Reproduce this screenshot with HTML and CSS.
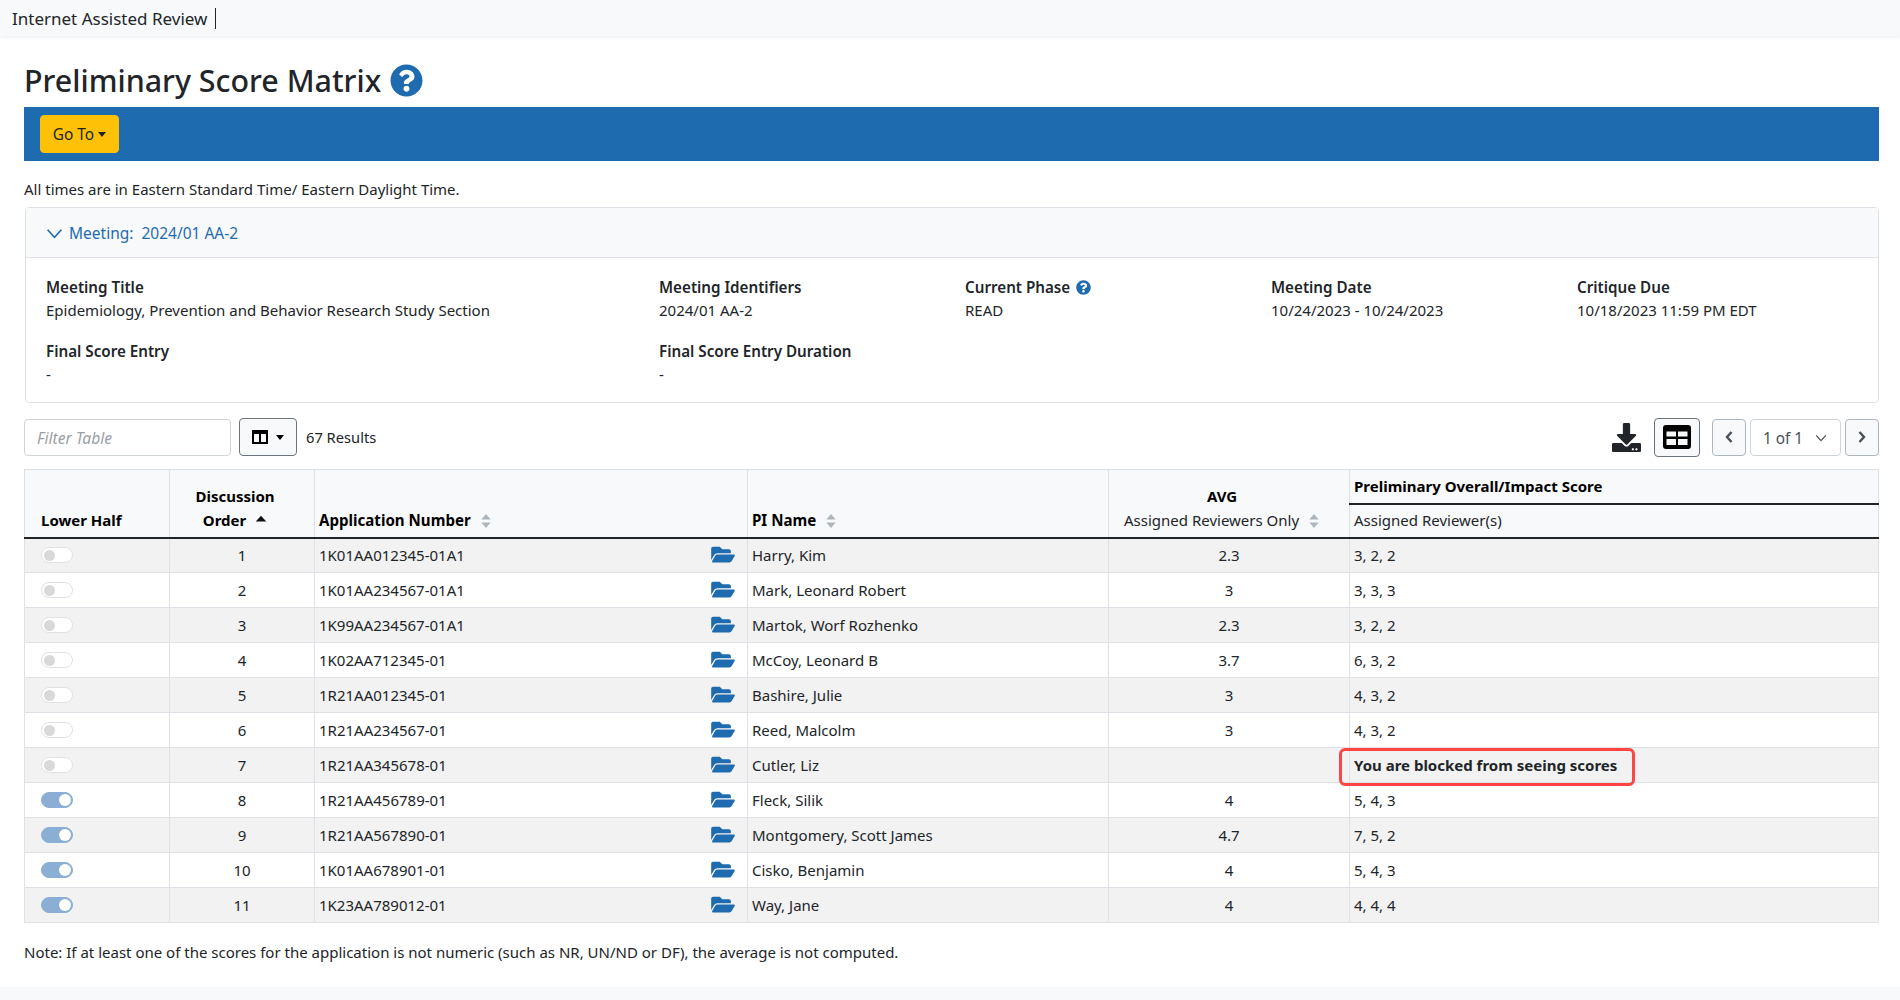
FILE: index.html
```html
<!DOCTYPE html>
<html lang="en">
<head>
<meta charset="utf-8">
<title>Preliminary Score Matrix</title>
<link rel="stylesheet" href="styles.css">
</head>
<body>
<header class="topbar"><span class="brand">Internet Assisted Review</span></header>
<main class="main">
  <h1 class="title">Preliminary Score Matrix
    <svg class="title-help" viewBox="0 0 512 512"><path d="M504 256c0 136.997-111.043 248-248 248S8 392.997 8 256C8 119.083 119.043 8 256 8s248 111.083 248 248zM262.655 90c-54.497 0-89.255 22.957-116.549 63.758-3.536 5.286-2.353 12.415 2.715 16.258l34.699 26.31c5.205 3.947 12.621 3.008 16.665-2.122 17.864-22.658 30.113-35.797 57.303-35.797 20.429 0 45.698 13.148 45.698 32.958 0 14.976-12.363 22.667-32.534 33.976C247.128 238.528 216 254.941 216 296v4c0 6.627 5.373 12 12 12h56c6.627 0 12-5.373 12-12v-1.333c0-28.462 83.186-29.647 83.186-106.667 0-58.002-60.165-102-116.531-102zM256 338c-25.365 0-46 20.635-46 46 0 25.364 20.635 46 46 46s46-20.636 46-46c0-25.365-20.635-46-46-46z"/></svg>
  </h1>
  <div class="actionbar"><button class="goto">Go To<span class="caret"></span></button></div>
  <p class="tz">All times are in Eastern Standard Time/ Eastern Daylight Time.</p>

  <section class="card">
    <div class="card-head">
      <svg class="chev" viewBox="0 0 16 16"><path d="M1.5 4.5 8 11.5 14.5 4.5" fill="none" stroke="currentColor" stroke-width="1.5"/></svg>
      <span>Meeting:&nbsp; 2024/01 AA-2</span>
    </div>
    <div class="card-body">
      <div class="info"><b>Meeting Title</b><span>Epidemiology, Prevention and Behavior Research Study Section</span></div>
      <div class="info"><b>Meeting Identifiers</b><span>2024/01 AA-2</span></div>
      <div class="info"><b>Current Phase <svg class="mini-help" viewBox="0 0 512 512"><path d="M504 256c0 136.997-111.043 248-248 248S8 392.997 8 256C8 119.083 119.043 8 256 8s248 111.083 248 248zM262.655 90c-54.497 0-89.255 22.957-116.549 63.758-3.536 5.286-2.353 12.415 2.715 16.258l34.699 26.31c5.205 3.947 12.621 3.008 16.665-2.122 17.864-22.658 30.113-35.797 57.303-35.797 20.429 0 45.698 13.148 45.698 32.958 0 14.976-12.363 22.667-32.534 33.976C247.128 238.528 216 254.941 216 296v4c0 6.627 5.373 12 12 12h56c6.627 0 12-5.373 12-12v-1.333c0-28.462 83.186-29.647 83.186-106.667 0-58.002-60.165-102-116.531-102zM256 338c-25.365 0-46 20.635-46 46 0 25.364 20.635 46 46 46s46-20.636 46-46c0-25.365-20.635-46-46-46z"/></svg></b><span>READ</span></div>
      <div class="info"><b>Meeting Date</b><span>10/24/2023 - 10/24/2023</span></div>
      <div class="info"><b>Critique Due</b><span>10/18/2023 11:59 PM EDT</span></div>
      <div class="info"><b>Final Score Entry</b><span>-</span></div>
      <div class="info span-rest"><b>Final Score Entry Duration</b><span>-</span></div>
    </div>
  </section>

  <div class="toolbar">
    <input class="filter" placeholder="Filter Table">
    <button class="colbtn">
      <svg class="col-ic" viewBox="0 0 16 14"><path d="M1 1h14v12H1z" fill="none" stroke="currentColor" stroke-width="2"/><path d="M8 1v12" stroke="currentColor" stroke-width="2"/><path d="M1 1h14v3H1z"/></svg>
      <span class="caret"></span>
    </button>
    <span class="results">67 Results</span>
    <div class="tools-right">
      <svg class="dl" viewBox="0 0 512 512"><path d="M216 0h80c13.3 0 24 10.7 24 24v168h87.7c17.8 0 26.7 21.5 14.1 34.1L269.7 378.3c-7.5 7.5-19.8 7.5-27.3 0L90.1 226.1c-12.6-12.6-3.7-34.1 14.1-34.1H192V24c0-13.3 10.7-24 24-24zm296 376v112c0 13.3-10.7 24-24 24H24c-13.3 0-24-10.7-24-24V376c0-13.3 10.7-24 24-24h146.7l49 49c20.1 20.1 52.5 20.1 72.6 0l49-49H488c13.3 0 24 10.7 24 24zm-124 88c0-11-9-20-20-20s-20 9-20 20 9 20 20 20 20-9 20-20zm64 0c0-11-9-20-20-20s-20 9-20 20 9 20 20 20 20-9 20-20z"/></svg>
      <button class="tablebtn">
        <svg viewBox="0 0 28 24" class="table-ic"><rect width="28" height="24" rx="3"/><rect x="3.5" y="6.5" width="9.5" height="5" fill="#f8f9fa"/><rect x="15" y="6.5" width="9.5" height="5" fill="#f8f9fa"/><rect x="3.5" y="14" width="9.5" height="6" fill="#f8f9fa"/><rect x="15" y="14" width="9.5" height="6" fill="#f8f9fa"/></svg>
      </button>
      <div class="pager">
        <button class="pg"><svg viewBox="0 0 10 14"><path d="M7.5 2 3 7l4.5 5" fill="none" stroke="currentColor" stroke-width="2.4"/></svg></button>
        <div class="pg-select">1 of 1<svg viewBox="0 0 16 16"><path d="M2.5 5 8 11l5.5-6" fill="none" stroke="currentColor" stroke-width="1.4"/></svg></div>
        <button class="pg"><svg viewBox="0 0 10 14"><path d="M2.5 2 7 7l-4.5 5" fill="none" stroke="currentColor" stroke-width="2.4"/></svg></button>
      </div>
    </div>
  </div>

  <table class="grid">
    <colgroup><col class="c1"><col class="c2"><col class="c3"><col class="c4"><col class="c5"><col></colgroup>
    <thead>
      <tr>
        <th rowspan="2" class="lower">Lower Half</th>
        <th rowspan="2" class="order">Discussion<br>Order <svg class="sort" viewBox="0 0 10 12"><path d="M5 1.5 9.5 6.5H.5z" fill="#111"/></svg></th>
        <th rowspan="2" class="left">Application Number <svg class="sort" viewBox="0 0 10 12"><path d="M5 0 9 4.7H1zM5 12 1 7.3h8z" fill="#adb5bd"/></svg></th>
        <th rowspan="2" class="left">PI Name <svg class="sort" viewBox="0 0 10 12"><path d="M5 0 9 4.7H1zM5 12 1 7.3h8z" fill="#adb5bd"/></svg></th>
        <th rowspan="2" class="avg">AVG<div class="sub">Assigned Reviewers Only <svg class="sort" viewBox="0 0 10 12"><path d="M5 0 9 4.7H1zM5 12 1 7.3h8z" fill="#adb5bd"/></svg></div></th>
        <th class="group">Preliminary Overall/Impact Score</th>
      </tr>
      <tr><th class="assigned">Assigned Reviewer(s)</th></tr>
    </thead>
    <tbody id="rows"></tbody>
  </table>
  <p class="note">Note: If at least one of the scores for the application is not numeric (such as NR, UN/ND or DF), the average is not computed.</p>
</main>
<div class="foot"></div>
<script src="app.js"></script>
</body>
</html>
```
FILE: app.js
```js
const data = [
  ["1","1K01AA012345-01A1","Harry, Kim","2.3","3, 2, 2",0],
  ["2","1K01AA234567-01A1","Mark, Leonard Robert","3","3, 3, 3",0],
  ["3","1K99AA234567-01A1","Martok, Worf Rozhenko","2.3","3, 2, 2",0],
  ["4","1K02AA712345-01","McCoy, Leonard B","3.7","6, 3, 2",0],
  ["5","1R21AA012345-01","Bashire, Julie","3","4, 3, 2",0],
  ["6","1R21AA234567-01","Reed, Malcolm","3","4, 3, 2",0],
  ["7","1R21AA345678-01","Cutler, Liz","","",0],
  ["8","1R21AA456789-01","Fleck, Silik","4","5, 4, 3",1],
  ["9","1R21AA567890-01","Montgomery, Scott James","4.7","7, 5, 2",1],
  ["10","1K01AA678901-01","Cisko, Benjamin","4","5, 4, 3",1],
  ["11","1K23AA789012-01","Way, Jane","4","4, 4, 4",1]
];
const folder = '<svg class="folder" viewBox="0 0 576 512"><path d="M572.694 292.093L500.27 416.248A63.997 63.997 0 0 1 444.989 448H45.025c-18.523 0-30.064-20.093-20.731-36.093l72.424-124.155A64 64 0 0 1 152 256h399.964c18.523 0 30.064 20.093 20.73 36.093zM152 224h328v-48c0-26.51-21.49-48-48-48H272l-64-64H48C21.49 64 0 85.49 0 112v278.046l69.077-118.418C86.214 242.25 117.989 224 152 224z"/></svg>';
document.getElementById("rows").innerHTML = data.map(r => {
  const score = r[0] === "7"
    ? '<td class="score blocked-cell"><span class="blocked">You are blocked from seeing scores</span></td>'
    : `<td class="score">${r[4]}</td>`;
  return `<tr><td class="tog"><span class="toggle${r[5] ? " on" : ""}"></span></td>` +
    `<td class="ctr">${r[0]}</td>` +
    `<td><div class="app"><span>${r[1]}</span>${folder}</div></td>` +
    `<td>${r[2]}</td><td class="ctr">${r[3]}</td>${score}</tr>`;
}).join("");
```
FILE: styles.css
```css
* { box-sizing: border-box; }
html, body { margin: 0; height: 1000px; overflow: hidden; }
body { font-family: "Noto Sans", "Open Sans", sans-serif; font-size: 15px; color: #212529; background: #fff; position: relative; }
button { font-family: inherit; }
.topbar { height: 36px; background: #f8f9fa; box-shadow: 0 1px 4px rgba(0,0,0,.08); padding-left: 12px; display: flex; align-items: center; }
.brand { font-size: 17px; color: #212529; border-right: 1px solid #212529; padding-right: 8px; line-height: 21px; }
.main { padding: 0 21px 0 24px; }
.title { margin: 0; height: 71px; padding-top: 19px; font-size: 30.4px; font-weight: 500; line-height: 40px; display: flex; align-items: center; gap: 9px; }
.title-help { width: 33px; height: 33px; fill: #1f6bb0; margin-top: -2px; }
.actionbar { height: 54px; background: #1f6bb0; padding: 8px 16px; }
.goto { height: 38px; width: 79px; background: #ffc107; border: 1px solid #ffc107; border-radius: 4px; font-size: 15.4px; color: #212529; padding: 0; }
.caret { display: inline-block; border-top: 5px solid currentColor; border-left: 4.5px solid transparent; border-right: 4.5px solid transparent; vertical-align: 3px; margin-left: 4px; }
.tz { margin: 0; height: 46px; padding-top: 17px; line-height: 22px; font-size: 15px; }
.card { margin-left: 1px; border: 1px solid #dee2e6; border-radius: 4px; height: 196px; }
.card-head { height: 50px; background: #f8f9fa; border-bottom: 1px solid #dee2e6; display: flex; align-items: center; padding: 1px 0 0 20px; gap: 6px; color: #1f6bb0; font-size: 15.5px; }
.chev { width: 17px; height: 17px; }
.card-body { display: grid; grid-template-columns: 613px 306px 306px 306px 1fr; padding: 16px 20px 0; grid-auto-rows: 64px; font-size: 15px; }
.info { display: flex; flex-direction: column; line-height: 24px; }
.info b { font-weight: 600; font-size: 15.2px; margin-top: 1px; margin-bottom: -1px; }
.info span { font-size: 15px; }
.span-rest { grid-column: 2 / -1; }
.mini-help { width: 15px; height: 15px; fill: #1f6bb0; vertical-align: -2px; margin-left: 2px; }
.toolbar { height: 66px; display: flex; align-items: center; padding-top: 2px; }
.filter { width: 207px; height: 37px; border: 1px solid #ced4da; border-radius: 4px; padding: 2px 12px 0; font: italic 15.6px "Noto Sans", sans-serif; }
.filter::placeholder { color: #9aa0a6; }
.colbtn { width: 58px; height: 38px; margin-left: 8px; background: #f8f9fa; border: 1px solid #6c757d; border-radius: 4px; color: #000; display: flex; align-items: center; justify-content: center; gap: 8px; padding: 0; }
.col-ic { width: 16px; height: 14px; }
.colbtn .caret { margin: 0; vertical-align: 0; }
.results { margin-left: 9px; font-size: 14.7px; }
.tools-right { margin-left: auto; display: flex; align-items: center; }
.dl { width: 29px; height: 29px; fill: #212529; }
.tablebtn { width: 46px; height: 39px; margin-left: 13px; background: #f8f9fa; border: 1px solid #6c757d; border-radius: 4px; padding: 0; display: flex; align-items: center; justify-content: center; }
.table-ic { width: 28px; height: 24px; }
.pager { display: flex; margin-left: 12px; gap: 4px; }
.pg { width: 34px; height: 37px; background: #f8f9fa; border: 1px solid #adb5bd; border-radius: 4px; color: #495057; padding: 0; display: flex; align-items: center; justify-content: center; }
.pg svg { width: 10px; height: 14px; }
.pg-select { width: 91px; height: 37px; border: 1px solid #ced4da; border-radius: 4px; color: #495057; display: flex; align-items: center; justify-content: center; gap: 11px; font-size: 15.4px; padding-top: 2px; }
.pg-select svg { width: 14px; height: 14px; }
.grid { width: 1855px; border-collapse: collapse; table-layout: fixed; font-size: 15px; }
.c1 { width: 145px; } .c2 { width: 145px; } .c3 { width: 433px; } .c4 { width: 361px; } .c5 { width: 241px; }
.grid th, .grid td { border: 1px solid #dee2e6; }
.grid thead th { background: #f8f9fa; vertical-align: bottom; font-weight: 700; color: #000; padding: 0 4px; line-height: 24px; border-bottom: 2px solid #212529; }
.grid thead tr:first-child th { height: 34px; }
.grid thead tr:last-child th { height: 34px; }
.lower { text-align: left; padding: 0 16px 5px !important; }
.order { text-align: center; padding: 0 18px 5px 4px !important; }
.left { text-align: left; padding-bottom: 5px !important; font-size: 15.1px; }
.avg { text-align: center; padding: 0 18px 5px 4px !important; }
.sub { font-weight: 400; color: #212529; }
.group { text-align: left; vertical-align: middle !important; }
.assigned { text-align: left; font-weight: 400 !important; color: #212529 !important; vertical-align: middle !important; border-top: 0; padding-bottom: 2px !important; }
.sort { width: 12px; height: 14px; margin-left: 5px; vertical-align: -2px; }
.grid td { height: 35px; padding: 0 4px; line-height: 20px; }
.grid tbody tr:nth-child(odd) td { background: #f2f2f2; }
.ctr { text-align: center; }
.tog { padding-left: 16px !important; }
.toggle { display: block; width: 32px; height: 16px; border: 1px solid #dfe2e5; border-radius: 8px; position: relative; background: #fff; }
.toggle::after { content: ""; position: absolute; top: 1.5px; left: 2px; width: 11px; height: 11px; border-radius: 50%; background: #d9d9d9; }
.toggle.on { background: #8baed4; border-color: #8baed4; }
.toggle.on::after { top: 1px; left: auto; right: 1px; width: 12px; height: 12px; background: #fff; }
.app { display: flex; justify-content: space-between; align-items: center; padding-right: 8px; }
.folder { width: 24px; height: 21px; fill: #1f6bb0; margin-bottom: 2px; }
.blocked-cell { position: relative; font-weight: 700; }
.blocked { position: relative; }
.blocked::before { content: ""; position: absolute; left: -15px; right: -18px; top: -7px; bottom: -11px; border: 3px solid #f44; border-radius: 6px; }
.note { margin: 19px 0 0; line-height: 20px; font-size: 15px; }
.foot { position: absolute; left: 0; right: 0; bottom: 0; height: 13px; background: #f8f9fa; }
```
